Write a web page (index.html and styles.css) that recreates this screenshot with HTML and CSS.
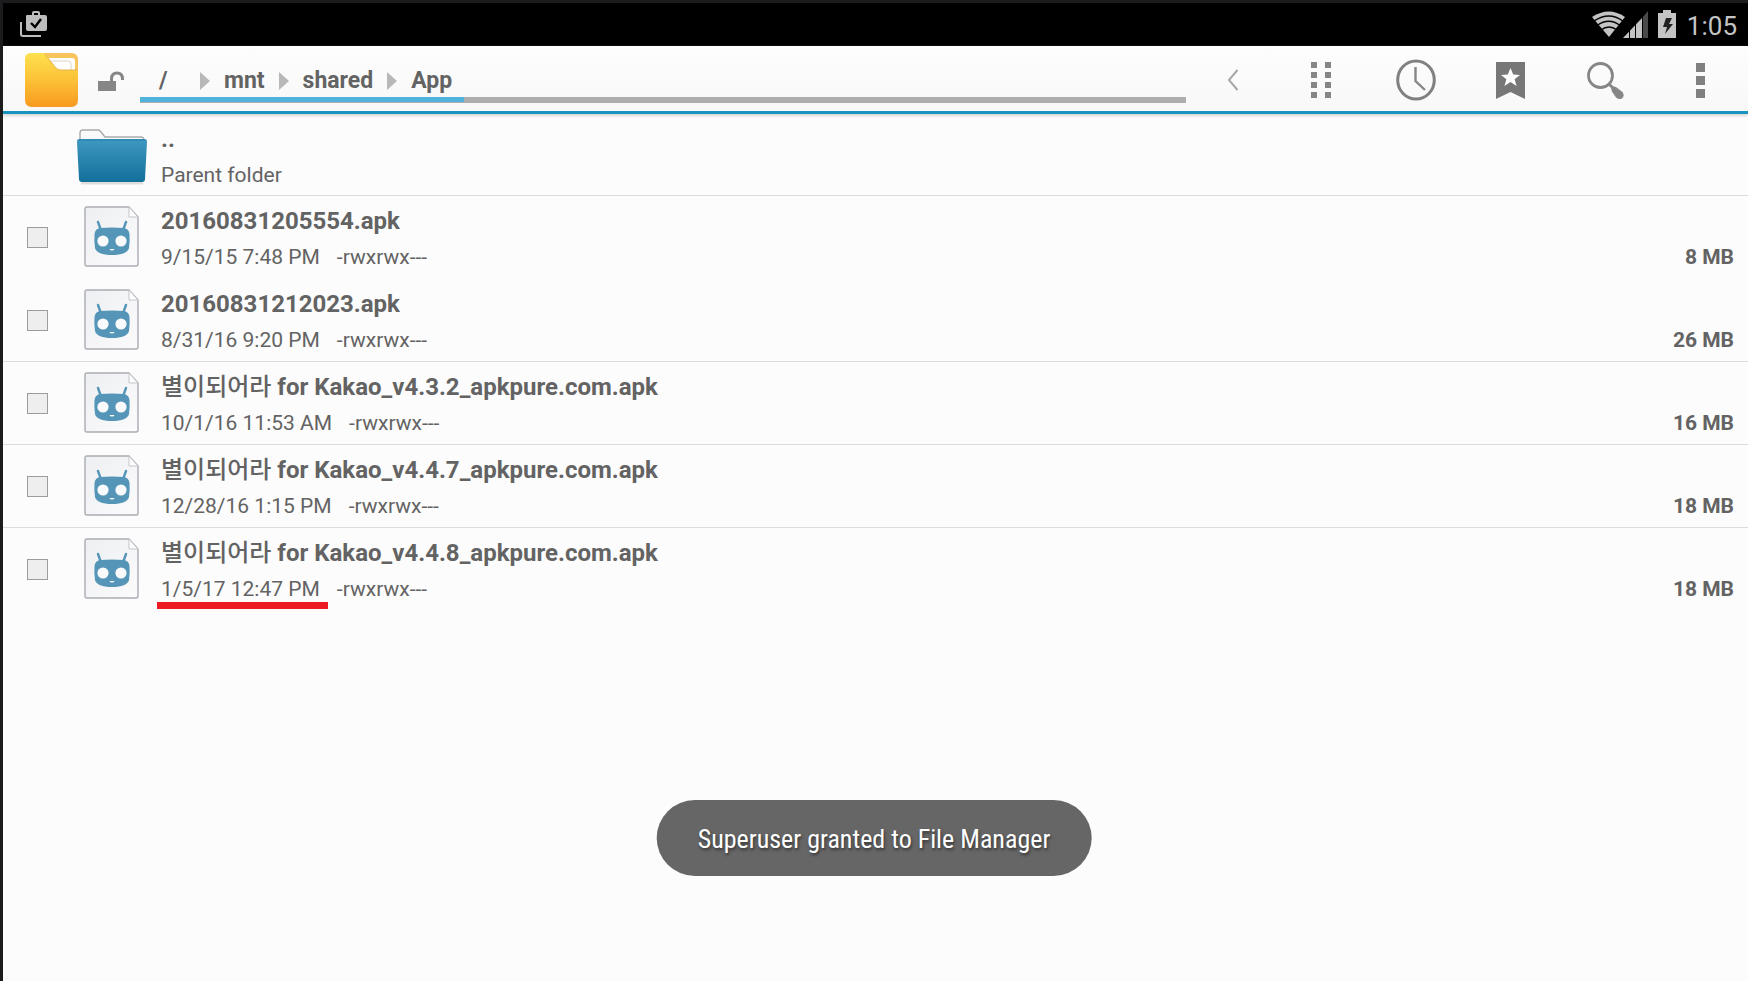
FILE: index.html
```html
<!DOCTYPE html>
<html lang="en">
<head>
    <meta charset="UTF-8">
    <meta name="viewport" content="width=device-width, initial-scale=1.0">
    <title>File Manager</title>
    <link rel="stylesheet" href="styles.css">
</head>
<body>
    <!-- Shared icons -->
    <svg class="sprite" aria-hidden="true">
        <defs>
            <linearGradient id="paper" x1="0" y1="0" x2="1" y2="1">
                <stop offset="0" stop-color="#eeeff2"/>
                <stop offset="1" stop-color="#fbfbfc"/>
            </linearGradient>
        </defs>
        <symbol id="apk" viewBox="0 0 55 61">
            <path d="M3 1H45L54 11V58Q54 60 52 60H3Q1 60 1 58V3Q1 1 3 1Z" fill="url(#paper)" stroke="#a9acb2" stroke-width="1.4"/>
            <path d="M45 1V11H54Z" fill="#fdfdfd" stroke="#c3c5c9"/>
            <path d="M14 16L16.500 23M42 16L39.500 23" stroke="#5596b8" stroke-width="2.400" stroke-linecap="round"/>
            <path d="M16 22Q28 21 40 22Q45 23 45.500 28Q46 35 45 42Q43 49 28 49Q13 49 11 42Q10 35 10.500 28Q11 23 16 22Z" fill="#5596b8"/>
            <circle cx="19" cy="35" r="5.600" fill="#f8fafc"/>
            <circle cx="37" cy="35" r="5.600" fill="#f8fafc"/>
            <path d="M25.500 43H30.500Q30 44.500 28 44.500Q26 44.500 25.500 43Z" fill="#f8fafc"/>
        </symbol>
        <symbol id="arrow" viewBox="0 0 10 18">
            <path d="M0 0L10 9L0 18Z" fill="#b8b8b8"/>
        </symbol>
    </svg>

    <!-- Status bar -->
    <header class="status">
        <svg class="bag" viewBox="0 0 27 26" width="27" height="26">
            <path d="M1 11V23Q1 25 3 25H21" fill="none" stroke="#bdbdbd" stroke-width="2"/>
            <path d="M7 4H12V2Q12 0 14 0H18Q20 0 20 2V4H25Q27 4 27 6V18Q27 20 25 20H8Q6 20 6 18V5Q6 4 7 4ZM14 2V4H18V2Z" fill="#bdbdbd" fill-rule="evenodd"/>
            <path d="M11 12L15 16L21 8" fill="none" stroke="#000" stroke-width="2.400"/>
        </svg>
        <div class="status-right">
            <svg viewBox="0 0 57 28" width="57" height="28">
                <path d="M0 7Q17 -4 33 7L17 27Z" fill="#c4c4c4"/>
                <path d="M2 11Q17 1 31 11M5 15.500Q17 7 28 15.500M9 20Q17 14 25 20" fill="none" stroke="#000" stroke-width="1.500"/>
                <path d="M31 28L50 8V28Z" fill="#c4c4c4"/>
                <path d="M51 7L56 1V28H51Z" fill="#4a4a4a"/>
                <path d="M37.500 18V28M43.500 12V28M50.500 5V28" stroke="#000"/>
            </svg>
            <svg viewBox="0 0 18 28" width="18" height="28">
                <path d="M5 0H13V3H18V28H0V3H5Z" fill="#c4c4c4"/>
                <path d="M8 8L5 17H9L7 24L15 14H11L14 8Z" fill="#222"/>
            </svg>
            <time class="clock">1:05</time>
        </div>
    </header>

    <!-- Toolbar -->
    <nav class="toolbar">
        <svg class="app-icon" viewBox="0 0 53 54" width="53" height="54">
            <defs>
                <linearGradient id="yellow" x1="0" y1="0" x2="0" y2="1">
                    <stop offset="0" stop-color="#fde14f"/>
                    <stop offset=".5" stop-color="#fcc137"/>
                    <stop offset="1" stop-color="#f89a20"/>
                </linearGradient>
            </defs>
            <rect x="8" width="45" height="40" rx="6" fill="#f8c45c"/>
            <path d="M22 5H47Q50 5 50 8V20H30Z" fill="#fff"/>
            <path d="M25 8H43Q46 8 46 11V18" fill="none" stroke="#ddd2c2"/>
            <path d="M6 0H17Q20 0 22 3L30 14Q32 17 35 17H53V47Q53 54 46 54H7Q0 54 0 47V6Q0 0 6 0Z" fill="url(#yellow)"/>
            <path d="M20 2L31 15Q33 17 36 17H53" fill="none" stroke="#e8b14b"/>
        </svg>
        <button class="lock" type="button" aria-label="Unlocked">
            <svg viewBox="0 0 26 20" width="26" height="20">
                <path d="M0 10H18V20H0Z" fill="#868686"/>
                <path d="M13.500 10V8Q13.500 2 19 2Q24.500 2 24.500 8V9" fill="none" stroke="#868686" stroke-width="3"/>
            </svg>
        </button>
        <div class="path">
            <div class="crumbs">
                <a class="root" href="#">/</a>
                <svg width="10" height="18"><use href="#arrow"/></svg>
                <a href="#">mnt</a>
                <svg width="10" height="18"><use href="#arrow"/></svg>
                <a href="#">shared</a>
                <svg width="10" height="18"><use href="#arrow"/></svg>
                <a href="#">App</a>
            </div>
            <div class="usage"><div class="usage-fill" style="width: 31%"></div></div>
        </div>
        <button class="back" type="button" aria-label="Back">
            <svg viewBox="0 0 12 22" width="12" height="22">
                <path d="M10.500 1L2 11L10.500 21" fill="none" stroke="#a8a8a8" stroke-width="2"/>
            </svg>
        </button>
        <button class="action" type="button" aria-label="View mode">
            <svg viewBox="0 0 20 36" width="20" height="36">
                <path d="M0 0H6V6H0ZM14 0H20V6H14ZM0 10H6V16H0ZM14 10H20V16H14ZM0 20H6V26H0ZM14 20H20V26H14ZM0 30H6V36H0ZM14 30H20V36H14Z" fill="#868686"/>
            </svg>
        </button>
        <button class="action" type="button" aria-label="History">
            <svg viewBox="0 0 40 42" width="40" height="42">
                <ellipse cx="20" cy="21" rx="18.300" ry="19" fill="none" stroke="#808080" stroke-width="3"/>
                <path d="M19.500 8V22L29 31" fill="none" stroke="#868686" stroke-width="2.400"/>
            </svg>
        </button>
        <button class="action" type="button" aria-label="Bookmarks">
            <svg viewBox="0 0 29 37" width="29" height="37">
                <path d="M0 0H29V37L14.500 30L0 37Z" fill="#777"/>
                <path d="M14.500 6L17.200 12.600L24 13L18.600 17.300L20.600 24L14.500 20L8.400 24L10.400 17.300L5 13L11.800 12.600Z" fill="#fff"/>
            </svg>
        </button>
        <button class="action" type="button" aria-label="Search">
            <svg viewBox="0 0 37 37" width="37" height="37">
                <circle cx="13.500" cy="13.500" r="12" fill="none" stroke="#868686" stroke-width="2.800"/>
                <path d="M22 22L26 26" stroke="#868686" stroke-width="3"/>
                <path d="M24.500 26Q26 23.500 29 25L35.500 30Q38 34 35 36.500Q32 38 29 35.500L25 29.500Q24 27.500 24.500 26Z" fill="#868686"/>
            </svg>
        </button>
        <button class="action" type="button" aria-label="More options">
            <svg viewBox="0 0 9 35" width="9" height="35">
                <path d="M0 0H9V9H0ZM0 13H9V22H0ZM0 26H9V35H0Z" fill="#808080"/>
            </svg>
        </button>
    </nav>

    <!-- File list -->
    <main>
        <ul class="files">
            <li class="row parent-row">
                <a class="parent" href="#">
                    <svg class="folder" viewBox="0 0 70 56" width="70" height="56">
                        <defs>
                            <linearGradient id="blue" x1="0" y1="0" x2="0" y2="1">
                                <stop offset="0" stop-color="#3f98c1"/>
                                <stop offset="1" stop-color="#11709a"/>
                            </linearGradient>
                        </defs>
                        <path d="M3 12V4Q3 1 6 1H21Q23 1 24 3L28 8H64Q67 8 67 12" fill="#fafafa" stroke="#aaa" stroke-width="1.400"/>
                        <path d="M4 54H66" stroke="#ddd" stroke-width="3"/>
                        <path d="M2 10H68Q70 10 70 13L68 50Q68 53 65 53H5Q2 53 2 50L0 13Q0 10 2 10Z" fill="url(#blue)"/>
                        <path d="M2 11H68" stroke="#267fa9"/>
                    </svg>
                    <span class="info">
                        <span class="name">..</span>
                        <span class="meta">Parent folder</span>
                    </span>
                </a>
            </li>
            <li class="row no-line">
                <input type="checkbox" id="file1">
                <svg class="file-icon" width="55" height="61"><use href="#apk"/></svg>
                <div class="info">
                    <label class="name" for="file1">20160831205554.apk</label>
                    <div class="meta"><span>9/15/15 7:48 PM</span><span>-rwxrwx---</span><span class="size">8 MB</span></div>
                </div>
            </li>
            <li class="row">
                <input type="checkbox" id="file2">
                <svg class="file-icon" width="55" height="61"><use href="#apk"/></svg>
                <div class="info">
                    <label class="name" for="file2">20160831212023.apk</label>
                    <div class="meta"><span>8/31/16 9:20 PM</span><span>-rwxrwx---</span><span class="size">26 MB</span></div>
                </div>
            </li>
            <li class="row">
                <input type="checkbox" id="file3">
                <svg class="file-icon" width="55" height="61"><use href="#apk"/></svg>
                <div class="info">
                    <label class="name" for="file3"><span lang="ko">별이되어라</span> for Kakao_v4.3.2_apkpure.com.apk</label>
                    <div class="meta"><span>10/1/16 11:53 AM</span><span>-rwxrwx---</span><span class="size">16 MB</span></div>
                </div>
            </li>
            <li class="row">
                <input type="checkbox" id="file4">
                <svg class="file-icon" width="55" height="61"><use href="#apk"/></svg>
                <div class="info">
                    <label class="name" for="file4"><span lang="ko">별이되어라</span> for Kakao_v4.4.7_apkpure.com.apk</label>
                    <div class="meta"><span>12/28/16 1:15 PM</span><span>-rwxrwx---</span><span class="size">18 MB</span></div>
                </div>
            </li>
            <li class="row no-line">
                <input type="checkbox" id="file5">
                <svg class="file-icon" width="55" height="61"><use href="#apk"/></svg>
                <div class="info">
                    <label class="name" for="file5"><span lang="ko">별이되어라</span> for Kakao_v4.4.8_apkpure.com.apk</label>
                    <div class="meta"><span class="marked">1/5/17 12:47 PM</span><span>-rwxrwx---</span><span class="size">18 MB</span></div>
                </div>
            </li>
        </ul>
    </main>

    <div class="toast" role="status">Superuser granted to File Manager</div>
</body>
</html>
```
FILE: styles.css
```css
/* Global Styling */
* {
    box-sizing: border-box;
}

body {
    margin: 0;
    min-height: 100vh;
    border-top: 3px solid #1c1c1f;
    border-left: 3px solid #1c1c1f;
    background: #fcfcfc;
    color: #636363;
    font-family: Roboto, "Noto Sans CJK KR", sans-serif;
}

svg {
    display: block;
    flex: none;
}

a {
    color: inherit;
    text-decoration: none;
}

button {
    display: flex;
    align-items: center;
    justify-content: center;
    padding: 0;
    border: none;
    background: none;
    cursor: pointer;
}

.sprite {
    position: absolute;
    width: 0;
    height: 0;
}

/* Status Bar */
.status {
    display: flex;
    align-items: center;
    justify-content: space-between;
    height: 43px;
    padding: 0 11px 2px 17px;
    background: #000;
}

.status-right {
    display: flex;
    align-items: center;
    gap: 9px;
}

.clock {
    padding: 4px 0 0 2px;
    color: #c4c4c4;
    font-size: 26px;
    line-height: 30px;
}

/* Toolbar */
.toolbar {
    display: flex;
    height: 68px;
    padding-left: 22px;
    border-bottom: 3px solid #1893bf;
    background: linear-gradient(to bottom, #fdfdfd, #f8f8f8);
    box-shadow: 0 2px 3px #d4d4d4;
}

.app-icon {
    align-self: center;
    margin-top: 3px;
}

.lock {
    width: 62px;
    padding: 4px 0 0 4px;
}

.path {
    display: flex;
    flex: 1;
    flex-direction: column;
}

.crumbs {
    display: flex;
    flex: 1;
    align-items: center;
    gap: 14px;
    padding: 18px 0 0 19px;
    font-size: 23px;
    font-weight: bold;
    line-height: 28px;
}

.root {
    width: 27px;
}

.usage {
    height: 6px;
    margin-bottom: 8px;
    background: #adadad;
}

.usage-fill {
    height: 5px;
    background: #4fb3dc;
}

.back {
    width: 87px;
    padding: 3px 0 0 6px;
}

.action {
    width: 95px;
    padding-top: 3px;
}

/* File List */
.files {
    margin: 0;
    padding: 0;
    list-style: none;
}

.row {
    display: flex;
    align-items: center;
    height: 83px;
    padding: 0 14px 0 24px;
    border-bottom: 1px solid #dcdcdc;
}

.parent-row {
    height: 82px;
}

.no-line {
    border-bottom-color: transparent;
}

.row input {
    appearance: none;
    flex: none;
    width: 21px;
    height: 21px;
    margin: 0 36px 0 0;
    border: 1px solid #9c9c9c;
    background: #eee;
}

.file-icon {
    margin: 0 22px 2px 0;
}

.parent {
    display: flex;
    flex: 1;
    align-items: center;
    padding-left: 50px;
}

.folder {
    margin: 4px 14px 0 0;
}

.info {
    display: flex;
    flex: 1;
    flex-direction: column;
    padding-top: 4px;
    line-height: 34px;
}

.name {
    height: 36px;
    font-size: 24px;
    font-weight: bold;
}

.name span {
    font-weight: 500;
    line-height: 1;
}

.meta {
    display: flex;
    gap: 17px;
    font-size: 21px;
}

.size {
    margin-left: auto;
    font-weight: bold;
}

/* Highlight under the newest date */
.marked {
    position: relative;
}

.marked::after {
    content: "";
    position: absolute;
    right: -8px;
    bottom: -3px;
    left: -4px;
    height: 7px;
    background: #ed1c24;
}

/* Toast */
.toast {
    position: fixed;
    bottom: 105px;
    left: 50%;
    transform: translateX(-50%);
    padding: 21px 41px 19px;
    border-radius: 38px;
    background: #666;
    color: #fff;
    font-family: "Roboto Condensed", Roboto, sans-serif;
    font-size: 26px;
    line-height: 36px;
    white-space: nowrap;
    text-shadow: 1px 2px 3px #333;
}
```
